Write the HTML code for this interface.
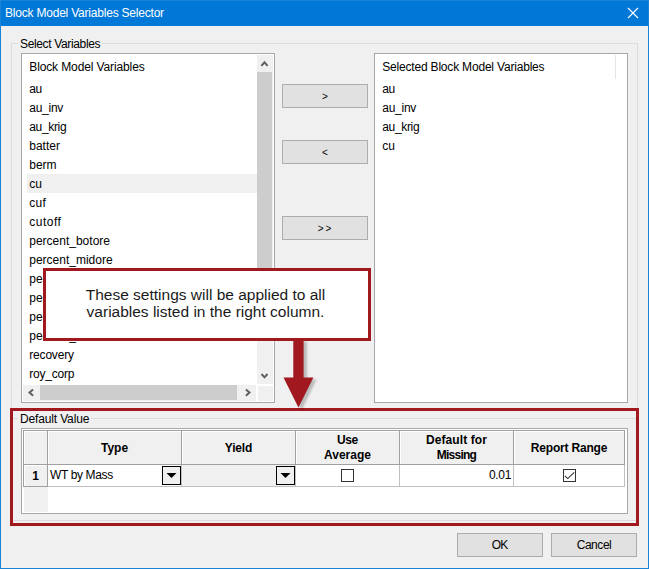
<!DOCTYPE html>
<html>
<head>
<meta charset="utf-8">
<title>Block Model Variables Selector</title>
<style>
html,body{margin:0;padding:0;}
body{width:649px;height:569px;overflow:hidden;background:#f0f0f0;font-family:"Liberation Sans",sans-serif;font-size:12px;color:#000;position:relative;}
.abs{position:absolute;}
#win{position:absolute;left:0;top:0;width:647px;height:567px;border:1px solid #1883d7;background:transparent;z-index:5;pointer-events:none;}
#title{position:absolute;left:0;top:0;width:649px;height:26px;background:#0078d7;color:#fff;}
#title span{position:absolute;left:5px;top:5px;font-size:12px;line-height:16px;white-space:nowrap;letter-spacing:-0.21px;}
.grp{position:absolute;border:1px solid #dcdcdc;}
.grplabel{position:absolute;background:#f0f0f0;padding:0 2px;line-height:14px;white-space:nowrap;}
.list{position:absolute;border:1px solid #a4a7ad;background:#fff;}
.row{position:absolute;left:7.25px;margin-top:1px;height:19px;line-height:19px;white-space:nowrap;}
.btn{position:absolute;width:84px;height:22px;border:1px solid #adadad;background:#e1e1e1;text-align:center;line-height:22px;}
.arr{font-size:10px;line-height:23px;}
.hc{position:absolute;background:#f0f0f0;border-right:1px solid #a0a0a0;border-bottom:1px solid #a0a0a0;box-shadow:inset 1px 1px 0 #fff;font-weight:bold;text-align:center;line-height:15px;}
.cell{position:absolute;background:#fff;border-right:1px solid #c0c0c0;border-bottom:1px solid #c0c0c0;}
</style>
</head>
<body>
<div id="win"></div>
<div id="title"><span>Block Model Variables Selector</span>
<svg class="abs" style="left:627px;top:7px" width="12" height="12" viewBox="0 0 12 12"><path d="M1 1 L11 11 M11 1 L1 11" stroke="#fff" stroke-width="1.1" fill="none"/></svg>
</div>

<!-- Select Variables group -->
<div class="grp" style="left:11px;top:43px;width:625px;height:365px;"></div>
<div class="grplabel" style="left:18px;top:37px;letter-spacing:-0.35px;">Select Variables</div>

<!-- Left list -->
<div class="list" id="llist" style="left:21px;top:53px;width:252px;height:348px;">
  <div class="row" style="top:3px;letter-spacing:-0.12px;">Block Model Variables</div>
  <div class="abs" style="left:5px;top:120px;width:230px;height:19px;background:#f0f0f0;"></div>
  <div class="row" style="top:25px;letter-spacing:-0.3px;">au</div>
  <div class="row" style="top:44px;letter-spacing:-0.25px;">au_inv</div>
  <div class="row" style="top:63px;letter-spacing:-0.33px;">au_krig</div>
  <div class="row" style="top:82px;">batter</div>
  <div class="row" style="top:101px;">berm</div>
  <div class="row" style="top:120px;">cu</div>
  <div class="row" style="top:139px;letter-spacing:0.25px;">cuf</div>
  <div class="row" style="top:158px;letter-spacing:0.5px;">cutoff</div>
  <div class="row" style="top:177px;">percent_botore</div>
  <div class="row" style="top:196px;">percent_midore</div>
  <div class="row" style="top:215px;">percent_oxore</div>
  <div class="row" style="top:234px;">percent_sulore</div>
  <div class="row" style="top:253px;">percent_topore</div>
  <div class="row" style="top:272px;">percent_waste</div>
  <div class="row" style="top:291px;letter-spacing:-0.18px;">recovery</div>
  <div class="row" style="top:310px;letter-spacing:-0.2px;">roy_corp</div>
  <!-- v scrollbar -->
  <div class="abs" style="left:235px;top:1px;width:16px;height:329px;background:#f0f0f0;"></div>
  <div class="abs" style="left:235px;top:18px;width:15px;height:260px;background:#cdcdcd;"></div>
  <svg class="abs" style="left:235px;top:1px" width="16" height="17" viewBox="0 0 16 17"><path d="M4.4 10.9 L7.5 7.3 L10.6 10.9" stroke="#606060" stroke-width="2" fill="none"/></svg>
  <svg class="abs" style="left:235px;top:313px" width="16" height="17" viewBox="0 0 16 17"><path d="M4.5 7 L7.5 10.3 L10.5 7" stroke="#606060" stroke-width="2" fill="none"/></svg>
  <!-- h scrollbar -->
  <div class="abs" style="left:1px;top:331px;width:233px;height:16px;background:#f0f0f0;"></div>
  <div class="abs" style="left:18px;top:331px;width:197px;height:15px;background:#cdcdcd;"></div>
  <svg class="abs" style="left:1px;top:331px" width="17" height="16" viewBox="0 0 17 16"><path d="M10.1 4.4 L6.5 7.6 L10.1 10.8" stroke="#606060" stroke-width="2" fill="none"/></svg>
  <svg class="abs" style="left:215px;top:331px" width="17" height="16" viewBox="0 0 17 16"><path d="M8.9 4.4 L12.5 7.6 L8.9 10.8" stroke="#606060" stroke-width="2" fill="none"/></svg>
  <div class="abs" style="left:236px;top:332px;width:15px;height:15px;background:#f0f0f0;"></div>
</div>

<!-- buttons -->
<div class="btn arr" style="left:282px;top:84px;">&gt;</div>
<div class="btn arr" style="left:282px;top:140px;">&lt;</div>
<div class="btn arr" style="left:282px;top:216px;letter-spacing:2px;text-indent:1px;">&gt;&gt;</div>

<!-- Right list -->
<div class="list" id="rlist" style="left:374px;top:53px;width:252px;height:348px;">
  <div class="row" style="top:3px;letter-spacing:-0.19px;">Selected Block Model Variables</div>
  <div class="abs" style="left:240px;top:1px;width:1px;height:24px;background:#e5e5e5;"></div>
  <div class="row" style="top:25px;letter-spacing:-0.3px;">au</div>
  <div class="row" style="top:44px;letter-spacing:-0.25px;">au_inv</div>
  <div class="row" style="top:63px;letter-spacing:-0.33px;">au_krig</div>
  <div class="row" style="top:82px;">cu</div>
</div>

<!-- Default Value group -->
<div class="grp" style="left:11px;top:418px;width:625px;height:101px;"></div>
<div class="grplabel" style="left:18px;top:412px;letter-spacing:-0.15px;">Default Value</div>

<!-- grid -->
<div class="abs" id="grid" style="left:21px;top:428px;width:605px;height:84px;border:1px solid #a5a8ae;background:#fff;">
  <div class="abs" style="left:1px;top:1px;width:602px;height:1px;background:#a0a0a0;"></div>
  <div class="abs" style="left:1px;top:1px;width:1px;height:57px;background:#a0a0a0;"></div>
  <div class="abs" style="left:2px;top:58px;width:24px;height:25px;background:#f0f0f0;"></div>
  <div class="hc" style="left:2px;top:2px;width:23px;height:33px;"></div>
  <div class="hc" style="left:26px;top:2px;width:133px;height:33px;line-height:35px;">Type</div>
  <div class="hc" style="left:160px;top:2px;width:113px;height:33px;line-height:35px;letter-spacing:-0.15px;">Yield</div>
  <div class="hc" style="left:274px;top:2px;width:103px;height:33px;"><div style="margin-top:2px"><span style="letter-spacing:-0.4px">Use</span><br>Average</div></div>
  <div class="hc" style="left:378px;top:2px;width:113px;height:33px;"><div style="margin-top:2px"><span style="letter-spacing:0.1px">Default for</span><br><span style="letter-spacing:-0.75px">Missing</span></div></div>
  <div class="hc" style="left:492px;top:2px;width:110px;height:33px;line-height:35px;letter-spacing:-0.19px;">Report Range</div>

  <div class="hc" style="left:2px;top:36px;width:23px;height:21px;line-height:23px;">1</div>
  <div class="cell" style="left:26px;top:36px;width:133px;height:21px;line-height:21px;"><span style="margin-left:2px;letter-spacing:-0.36px">WT by Mass</span></div>
  <svg class="abs" style="left:140px;top:37px" width="19" height="19" viewBox="0 0 19 19"><rect x="0.5" y="0.5" width="18" height="18" fill="#f0f0f0" stroke="#000"/><path d="M4.5 7 L14.5 7 L9.5 12 Z" fill="#000"/></svg>
  <div class="cell" style="left:160px;top:36px;width:113px;height:21px;background:#f0f0f0;"></div>
  <svg class="abs" style="left:254px;top:37px" width="19" height="19" viewBox="0 0 19 19"><rect x="0.5" y="0.5" width="18" height="18" fill="#f0f0f0" stroke="#000"/><path d="M4.5 7 L14.5 7 L9.5 12 Z" fill="#000"/></svg>
  <div class="cell" style="left:274px;top:36px;width:103px;height:21px;"></div>
  <div class="abs" style="left:319px;top:40px;width:11px;height:11px;border:1px solid #333;background:#fff;"></div>
  <div class="cell" style="left:378px;top:36px;width:113px;height:21px;line-height:21px;text-align:right;"><span style="margin-right:2px;letter-spacing:-0.35px">0.01</span></div>
  <div class="cell" style="left:492px;top:36px;width:110px;height:21px;"></div>
  <div class="abs" style="left:541px;top:40px;width:11px;height:11px;border:1px solid #333;background:#fff;"></div>
  <svg class="abs" style="left:541px;top:40px" width="13" height="13" viewBox="0 0 13 13"><path d="M1.8 6.8 L4.8 9.6 L11.2 3.4" stroke="#333" stroke-width="1.1" fill="none"/></svg>
</div>

<!-- bottom buttons -->
<div class="btn" style="left:457px;top:533px;letter-spacing:-0.8px;text-indent:-0.8px;">OK</div>
<div class="btn" style="left:551px;top:533px;letter-spacing:-0.45px;">Cancel</div>

<!-- red annotation box around Default Value -->
<div class="abs" style="left:10px;top:408px;width:623px;height:112px;border:3px solid #a2181f;"></div>

<!-- arrow -->
<svg class="abs" style="left:275px;top:335px;" width="50" height="80" viewBox="0 0 50 80">
  <defs><filter id="sh" x="-30%" y="-10%" width="160%" height="120%"><feGaussianBlur stdDeviation="1.2"/></filter></defs>
  <path d="M19.5 5 L30.5 5 L30.5 43 L40 43 L25 74 L10 43 L19.5 43 Z" fill="#000" opacity="0.22" filter="url(#sh)" transform="translate(1.5,1.5)"/>
  <path d="M18.3 5 L28.6 5 L28.6 42.5 L38.4 42.5 L23.45 72.6 L8.5 42.5 L18.3 42.5 Z" fill="#a2181f"/>
</svg>

<!-- callout -->
<div class="abs" style="left:43px;top:268px;width:322px;height:67px;border:3px solid #a2181f;background:#fff;"></div>
<div class="abs" style="left:45px;top:285.75px;width:321px;font-size:15.5px;line-height:17.5px;white-space:nowrap;color:#1a1a1a;text-align:center;">These settings will be applied to all<br>variables listed in the right column.</div>

</body>
</html>
